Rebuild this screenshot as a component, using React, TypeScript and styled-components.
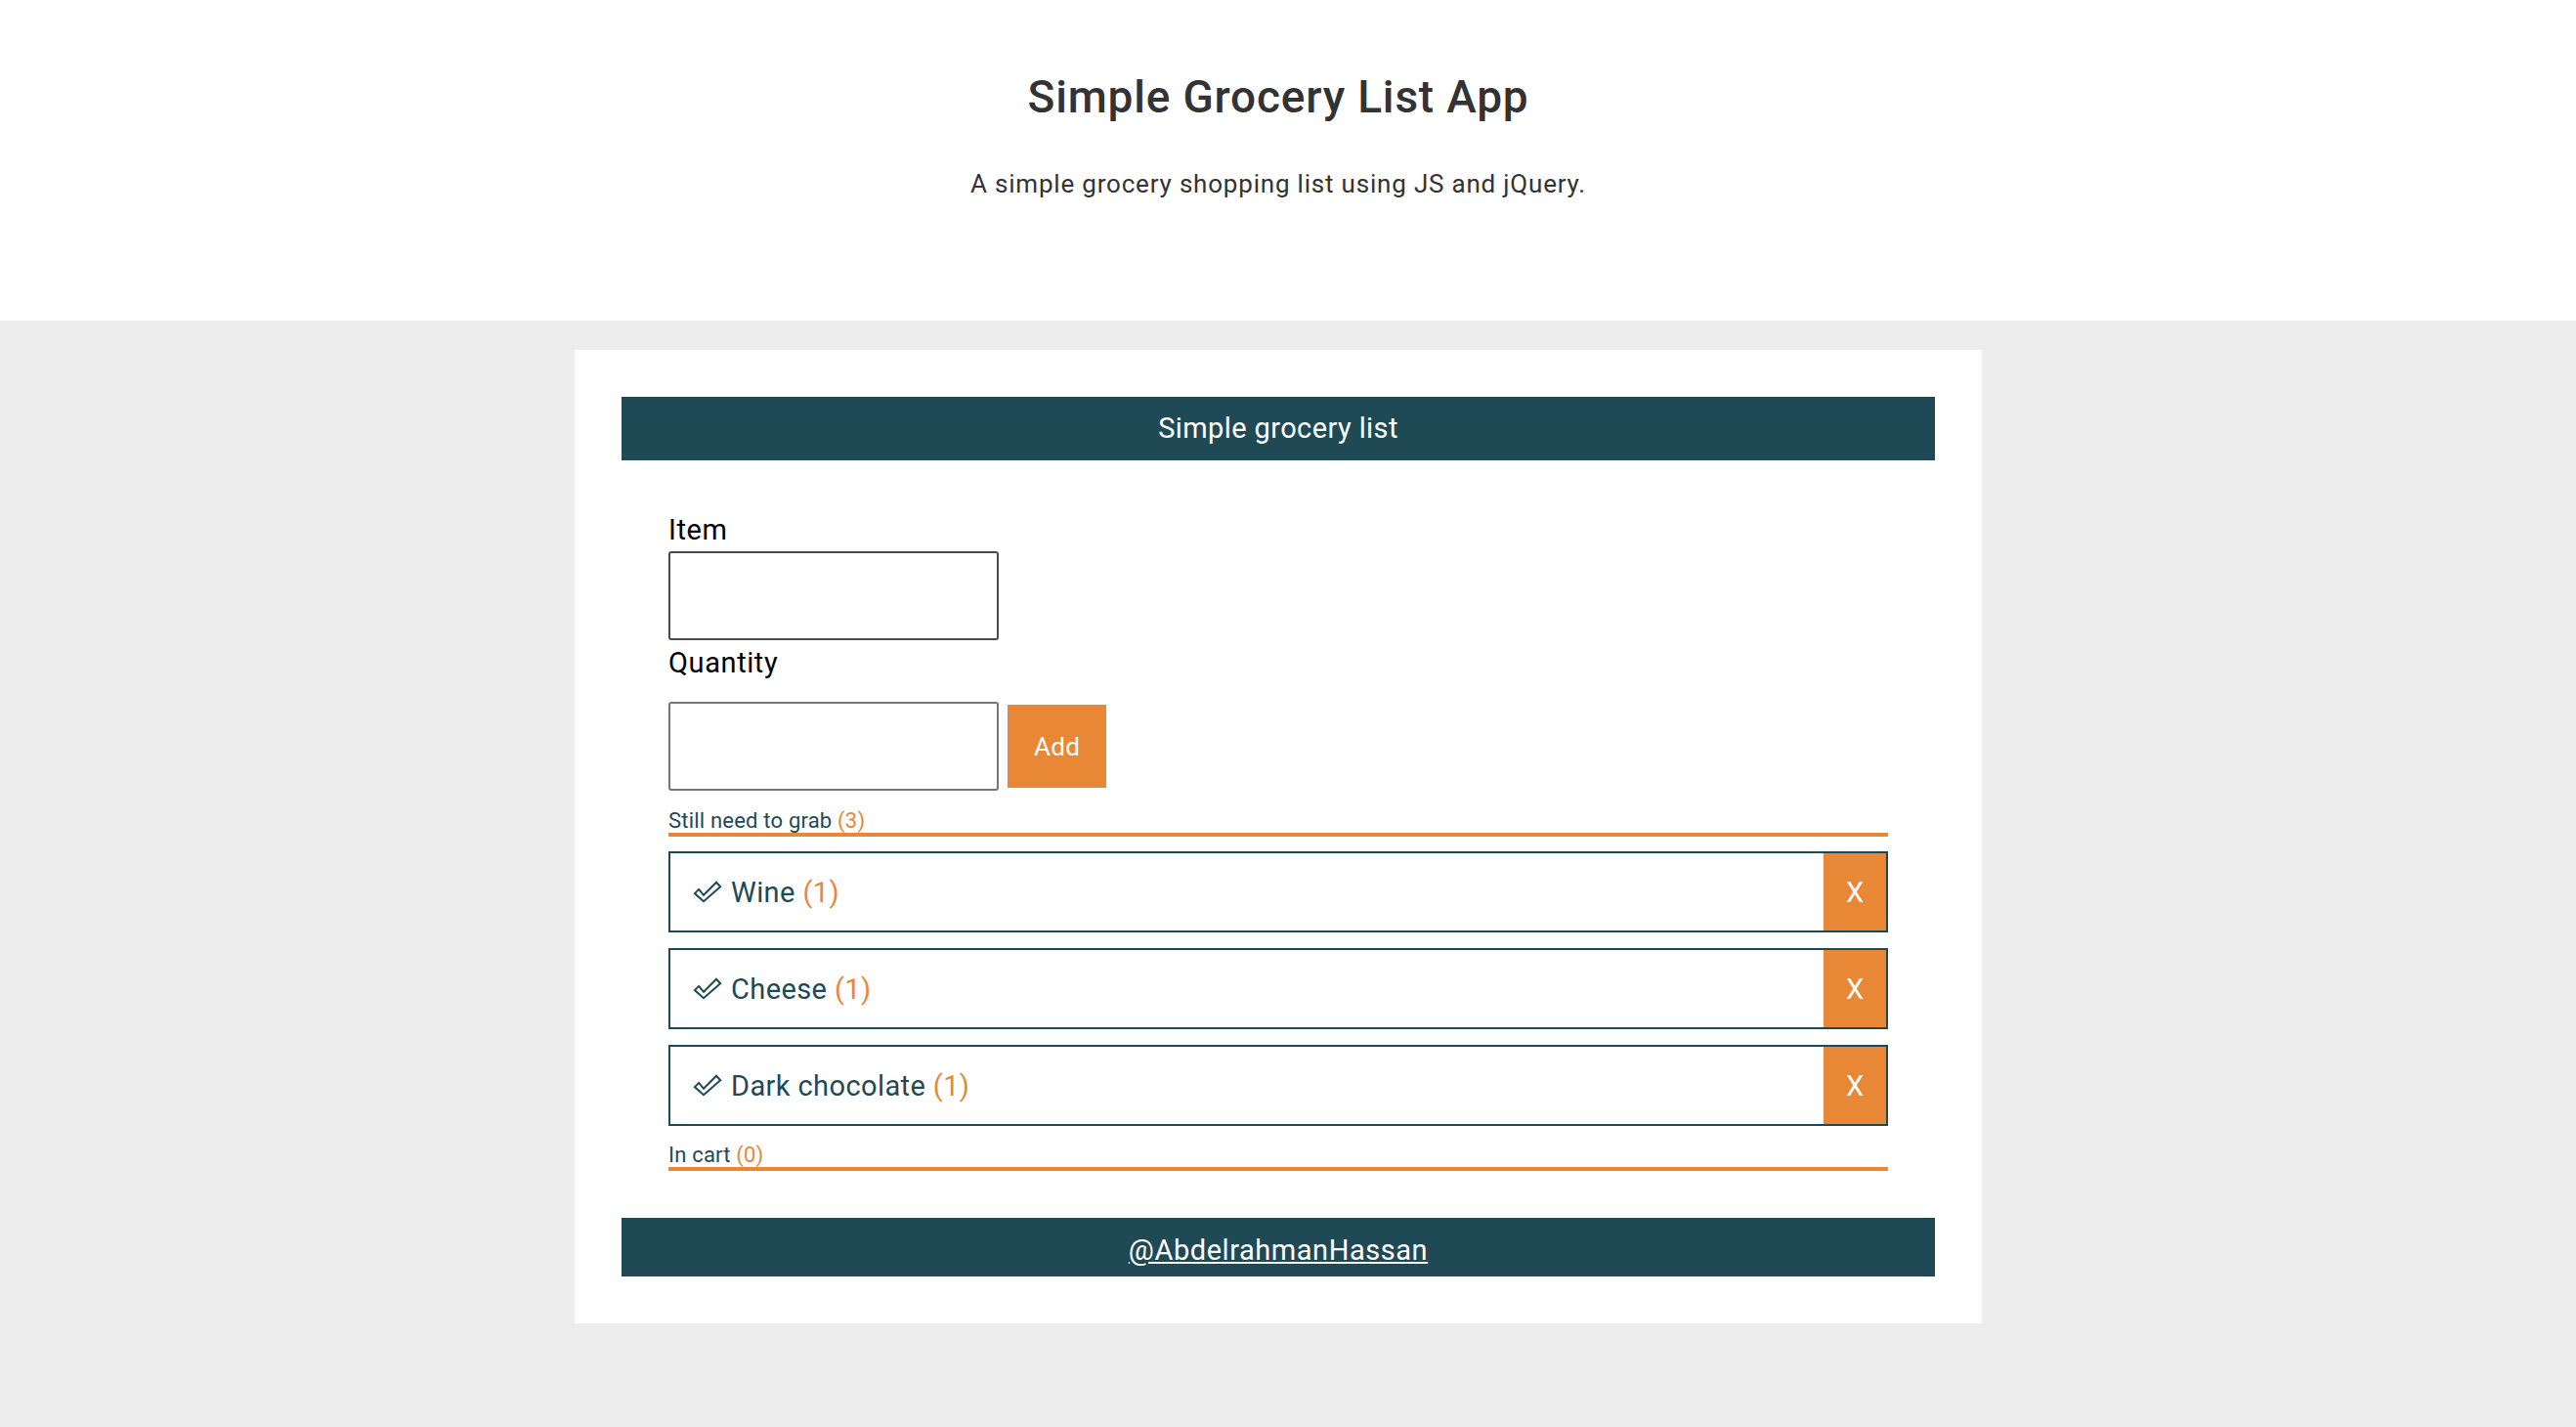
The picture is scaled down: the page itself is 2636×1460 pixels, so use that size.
import React from "react";
import styled, { createGlobalStyle } from "styled-components";

const TEAL = "#1f4955";
const ORANGE = "#e88736";

const GlobalStyle = createGlobalStyle`
  html, body {
    margin: 0;
    padding: 0;
    background: #ededed;
    font-family: Roboto, "Liberation Sans", Arial, sans-serif;
  }
  * { box-sizing: border-box; }
`;

const TopBand = styled.header`
  background: #ffffff;
  height: 328px;
  padding: 72px 20px 0 0;
  text-align: center;
  color: #333333;
`;

const Title = styled.h1`
  margin: 0;
  font-size: 46px;
  line-height: 54px;
  font-weight: 500;
  letter-spacing: 0.8px;
`;

const Subtitle = styled.p`
  margin: 47px 0 0;
  font-size: 26px;
  line-height: 30px;
  font-weight: 400;
  letter-spacing: 0.8px;
`;

const Main = styled.main`
  padding: 30px 20px 0 0;
`;

const Card = styled.section`
  width: 1440px;
  margin: 0 auto;
  background: #ffffff;
  padding: 48px;
`;

const Bar = styled.div<{ h: number }>`
  background: ${TEAL};
  color: #ffffff;
  text-align: center;
  font-size: 29px;
  letter-spacing: 0.4px;
  height: ${(p) => p.h}px;
  line-height: ${(p) => p.h}px;
`;

const Body = styled.div`
  padding: 0 48px;
`;

const Label = styled.label<{ top: number }>`
  display: block;
  margin-top: ${(p) => p.top}px;
  font-size: 29px;
  line-height: 33px;
  letter-spacing: 0.6px;
  color: #000000;
`;

const Field = styled.input<{ hovered?: boolean }>`
  display: block;
  width: 338px;
  height: 91px;
  margin: 0;
  border: 2px solid ${(p) => (p.hovered ? "#4a4a4a" : "#767676")};
  border-radius: 3px;
  background: #ffffff;
  font-size: 24px;
  padding: 4px 8px;
  font-family: inherit;
`;

const InputRow = styled.div`
  display: flex;
  align-items: center;
  gap: 9px;
  margin-top: 23px;
`;

const AddButton = styled.button`
  width: 101px;
  height: 85px;
  border: none;
  background: ${ORANGE};
  color: #ffffff;
  font-family: inherit;
  font-size: 26px;
  letter-spacing: 0.3px;
  padding: 0;
`;

const ListTitle = styled.div<{ top: number }>`
  margin-top: ${(p) => p.top}px;
  font-size: 22px;
  line-height: 25px;
  letter-spacing: 0.2px;
  color: ${TEAL};
  border-bottom: 4px solid ${ORANGE};
`;

const Count = styled.span`
  color: ${ORANGE};
`;

const List = styled.ul`
  list-style: none;
  margin: 15px 0 0;
  padding: 0;
  display: flex;
  flex-direction: column;
  gap: 16px;
`;

const Row = styled.li`
  display: flex;
  align-items: stretch;
  height: 83px;
  border: 2px solid ${TEAL};
`;

const RowLabel = styled.div`
  flex: 1;
  display: flex;
  align-items: center;
  gap: 9px;
  padding-left: 23px;
  font-size: 29px;
  letter-spacing: 0.4px;
  color: ${TEAL};
`;

const RemoveButton = styled.button`
  width: 64px;
  border: none;
  background: ${ORANGE};
  color: #ffffff;
  font-family: inherit;
  font-size: 29px;
  padding: 0;
`;

const FooterBar = styled(Bar)`
  margin-top: 48px;
`;

const FooterLink = styled.a`
  color: #ffffff;
  text-decoration: underline;
  font-size: 29px;
  letter-spacing: 0.55px;
  position: relative;
  top: 3px;
`;

const Check = () => (
  <svg width="30" height="23" viewBox="0 0 30 23" aria-hidden="true">
    <polygon
      points="6.1,8.9 11,14.8 24,1.8 28.2,6.2 11,21.2 1.9,13.1"
      fill="none"
      stroke={TEAL}
      strokeWidth="2"
      strokeLinejoin="miter"
    />
  </svg>
);

const items = [
  { name: "Wine", qty: 1 },
  { name: "Cheese", qty: 1 },
  { name: "Dark chocolate", qty: 1 },
];

export default function App() {
  return (
    <>
      <GlobalStyle />
      <TopBand>
        <Title>Simple Grocery List App</Title>
        <Subtitle>A simple grocery shopping list using JS and jQuery.</Subtitle>
      </TopBand>
      <Main>
        <Card>
          <Bar h={65}>Simple grocery list</Bar>
          <Body>
            <Label top={55} htmlFor="item">Item</Label>
            <Field id="item" type="text" hovered style={{ marginTop: 5 }} />
            <Label top={7} htmlFor="qty">Quantity</Label>
            <InputRow>
              <Field id="qty" type="text" />
              <AddButton>Add</AddButton>
            </InputRow>
            <ListTitle top={18}>
              Still need to grab <Count>({items.length})</Count>
            </ListTitle>
            <List>
              {items.map((it) => (
                <Row key={it.name}>
                  <RowLabel>
                    <Check />
                    <span>
                      {it.name} <Count>({it.qty})</Count>
                    </span>
                  </RowLabel>
                  <RemoveButton>X</RemoveButton>
                </Row>
              ))}
            </List>
            <ListTitle top={17}>
              In cart <Count>(0)</Count>
            </ListTitle>
          </Body>
          <FooterBar h={60}>
            <FooterLink href="#">@AbdelrahmanHassan</FooterLink>
          </FooterBar>
        </Card>
      </Main>
    </>
  );
}
